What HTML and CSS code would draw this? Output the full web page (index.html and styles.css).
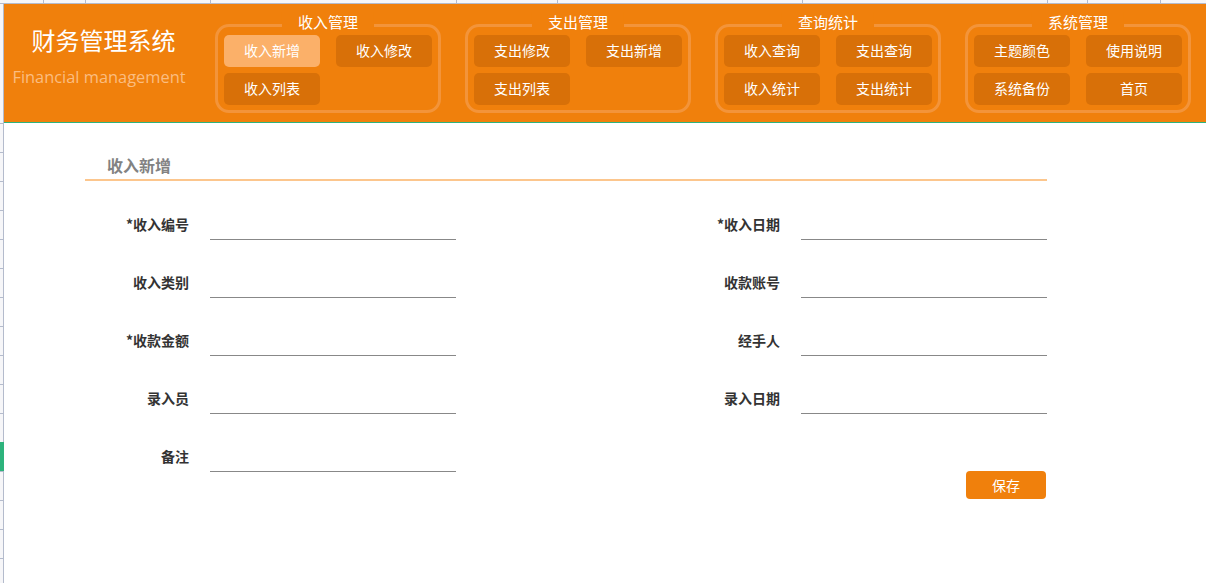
FILE: index.html
```html
<!DOCTYPE html>
<html lang="zh-CN">
<head>
<meta charset="utf-8">
<title>财务管理系统</title>
<link rel="stylesheet" href="styles.css">
</head>
<body>
<div class="topstrip">
  <span class="tick w43"></span><span class="tick w42"></span><span class="tick w125"></span><span class="tick w246"></span><span class="tick w101"></span><span class="tick w245"></span><span class="tick w245"></span><span class="tick w40"></span><span class="tick w73"></span>
</div>
<div class="main">
  <div class="gutter">
    <div class="gtop"></div>
    <div class="gcell"></div><div class="gcell"></div><div class="gcell"></div><div class="gcell"></div><div class="gcell"></div><div class="gcell"></div><div class="gcell"></div><div class="gcell"></div><div class="gcell"></div><div class="gcell"></div><div class="gcell"></div>
    <div class="gcell green"></div>
    <div class="gcell"></div><div class="gcell"></div><div class="gcell"></div><div class="gcell"></div>
  </div>
  <div class="content">
    <header class="header">
      <div class="brand">
        <div class="brand-title">财务管理系统</div>
        <div class="brand-sub">Financial management</div>
      </div>
      <nav class="groups">
        <div class="group">
          <div class="legend">收入管理</div>
          <div class="btns">
            <a class="nbtn active">收入新增</a><a class="nbtn">收入修改</a>
            <a class="nbtn">收入列表</a>
          </div>
        </div>
        <div class="group">
          <div class="legend">支出管理</div>
          <div class="btns">
            <a class="nbtn">支出修改</a><a class="nbtn">支出新增</a>
            <a class="nbtn">支出列表</a>
          </div>
        </div>
        <div class="group">
          <div class="legend">查询统计</div>
          <div class="btns">
            <a class="nbtn">收入查询</a><a class="nbtn">支出查询</a>
            <a class="nbtn">收入统计</a><a class="nbtn">支出统计</a>
          </div>
        </div>
        <div class="group">
          <div class="legend">系统管理</div>
          <div class="btns">
            <a class="nbtn">主题颜色</a><a class="nbtn">使用说明</a>
            <a class="nbtn">系统备份</a><a class="nbtn">首页</a>
          </div>
        </div>
      </nav>
    </header>
    <section class="form-area">
      <h2 class="section-title">收入新增</h2>
      <div class="rows">
        <div class="row">
          <div class="field"><label class="lbl">*收入编号</label><span class="inp"></span></div>
          <div class="field"><label class="lbl">*收入日期</label><span class="inp"></span></div>
        </div>
        <div class="row">
          <div class="field"><label class="lbl">收入类别</label><span class="inp"></span></div>
          <div class="field"><label class="lbl">收款账号</label><span class="inp"></span></div>
        </div>
        <div class="row">
          <div class="field"><label class="lbl">*收款金额</label><span class="inp"></span></div>
          <div class="field"><label class="lbl">经手人</label><span class="inp"></span></div>
        </div>
        <div class="row">
          <div class="field"><label class="lbl">录入员</label><span class="inp"></span></div>
          <div class="field"><label class="lbl">录入日期</label><span class="inp"></span></div>
        </div>
        <div class="row">
          <div class="field"><label class="lbl">备注</label><span class="inp"></span></div>
        </div>
      </div>
      <div class="actions"><button class="save">保存</button></div>
    </section>
  </div>
</div>
</body>
</html>
```

FILE: styles.css
```css
* { box-sizing: border-box; }
html, body { margin: 0; padding: 0; background: #fff; }
body {
  font-family: "Noto Sans CJK SC", "Open Sans", sans-serif;
  width: 1206px;
  height: 583px;
  overflow: hidden;
}
.topstrip {
  height: 4px;
  background: #f6f6f8;
  border-bottom: 1px solid #b4bbcc;
  display: flex;
}
.tick { height: 3px; border-right: 1px solid #b4bbcc; flex: none; }
.w43 { width: 44px; }
.w42 { width: 42px; }
.w125 { width: 125px; }
.w246 { width: 246px; }
.w101 { width: 101px; }
.w245 { width: 245px; }
.w40 { width: 40px; }
.w73 { width: 73px; }

.main { display: flex; height: 579px; }
.gutter {
  width: 4px;
  flex: none;
  background: #f6f6f8;
  border-right: 1px solid #b4bbcc;
  display: flex;
  flex-direction: column;
}
.gtop { height: 119px; flex: none; }
.gcell { height: 29px; flex: none; border-top: 1px solid #b4bbcc; }
.gcell.green { border-top-color: #2db37c; background: #2db37c; margin-right: -1px; }

.content { flex: 1; min-width: 0; }

.header {
  height: 119px;
  background: #f0800c;
  border-bottom: 1px solid #2db37c;
  display: flex;
  align-items: flex-start;
}
.brand {
  width: 199px;
  flex: none;
  text-align: center;
  padding-top: 20px;
}
.brand-title {
  color: #fff;
  font-size: 24px;
  line-height: 32px;
}
.brand-sub {
  color: #fbbd80;
  font-family: "Open Sans", "Noto Sans CJK SC", sans-serif;
  font-size: 16.4px;
  line-height: 22px;
  margin-top: 10px;
  padding-right: 9px;
  white-space: nowrap;
}
.groups {
  display: flex;
  gap: 24px;
  margin-left: 12px;
  padding-top: 20px;
}
.group {
  position: relative;
  width: 226px;
  height: 89px;
  border: 3px solid #f3943a;
  border-radius: 14px;
  padding: 8px 6px 0 6px;
}
.legend {
  position: absolute;
  top: -15px;
  left: 50%;
  transform: translateX(-50%);
  background: #f0800c;
  color: #fff;
  font-size: 15px;
  line-height: 20px;
  padding: 0 16px;
  white-space: nowrap;
}
.btns {
  display: grid;
  grid-template-columns: 96px 96px;
  column-gap: 16px;
  row-gap: 6px;
}
.nbtn {
  display: block;
  height: 32px;
  line-height: 30px;
  border-radius: 5px;
  background: #d87008;
  color: #fff;
  font-size: 14px;
  text-align: center;
}
.nbtn.active { background: #fbb069; }

.form-area {
  margin-left: 81px;
  width: 962px;
  padding-top: 30px;
}
.section-title {
  margin: 0;
  font-size: 16px;
  font-weight: bold;
  color: #828282;
  line-height: 24px;
  padding-left: 22px;
  padding-bottom: 2px;
  border-bottom: 2px solid #fcc68d;
}
.rows {
  display: flex;
  flex-direction: column;
  gap: 27px;
  margin-top: 28px;
}
.row {
  display: flex;
  justify-content: space-between;
}
.field {
  display: flex;
  align-items: flex-start;
  width: 371px;
  height: 31px;
}
.lbl {
  width: 104px;
  flex: none;
  text-align: right;
  margin-right: 21px;
  font-size: 14px;
  line-height: 30px;
  font-weight: bold;
  color: #333;
}
.inp {
  display: block;
  width: 246px;
  height: 31px;
  border-bottom: 1px solid #888;
}
.actions {
  display: flex;
  justify-content: flex-end;
  padding-right: 1px;
  margin-top: -1px;
}
.save {
  width: 80px;
  height: 28px;
  border: none;
  border-radius: 4px;
  background: #f0800c;
  color: #fff;
  font-family: "Noto Sans CJK SC", sans-serif;
  font-size: 14px;
  padding: 0;
}
```
